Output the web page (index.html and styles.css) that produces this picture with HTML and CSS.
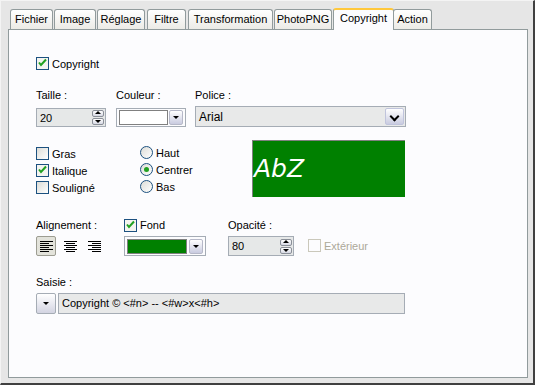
FILE: index.html
```html
<!DOCTYPE html>
<html lang="fr">
<head>
    <meta charset="UTF-8">
    <title>Copyright</title>
    <link rel="stylesheet" href="styles.css">
</head>
<body>
<div class="window">
    <div class="tabs">
        <div class="tab t-fichier">Fichier</div>
        <div class="tab t-image">Image</div>
        <div class="tab t-reglage">Réglage</div>
        <div class="tab t-filtre">Filtre</div>
        <div class="tab t-transfo">Transformation</div>
        <div class="tab t-photo">PhotoPNG</div>
        <div class="tab t-copy active">Copyright</div>
        <div class="tab t-action">Action</div>
    </div>

    <div class="panel">
        <div class="row row-enable">
            <label class="check"><span class="box checked"></span>Copyright</label>
        </div>

        <div class="row row-font">
            <div class="field w-taille">
                <div class="caption">Taille :</div>
                <div class="spin">
                    <span class="spin-value">20</span>
                    <span class="spin-btns"><span class="sb up"></span><span class="sb down"></span></span>
                </div>
            </div>
            <div class="field w-couleur">
                <div class="caption">Couleur :</div>
                <div class="combo color-combo">
                    <span class="swatch white"></span>
                    <span class="drop small"></span>
                </div>
            </div>
            <div class="field">
                <div class="caption">Police :</div>
                <div class="combo select">
                    <span class="select-value">Arial</span>
                    <span class="drop big"></span>
                </div>
            </div>
        </div>

        <div class="row row-style">
            <div class="checks">
                <label class="check"><span class="box"></span>Gras</label>
                <label class="check"><span class="box checked"></span>Italique</label>
                <label class="check"><span class="box"></span>Souligné</label>
            </div>
            <div class="radios">
                <label class="radio"><span class="dot"></span>Haut</label>
                <label class="radio"><span class="dot on"></span>Centrer</label>
                <label class="radio"><span class="dot"></span>Bas</label>
            </div>
            <div class="preview">AbZ</div>
        </div>

        <div class="row row-align">
            <div class="field w-align">
                <div class="caption">Alignement :</div>
                <div class="align-btns">
                    <span class="abtn pressed">
                        <svg width="13" height="11" viewBox="0 0 13 11"><path d="M0 .5h13M0 2.5h9M0 4.5h13M0 6.5h9M0 8.5h13M0 10.5h9" stroke="#000"/></svg>
                    </span>
                    <span class="abtn">
                        <svg width="13" height="11" viewBox="0 0 13 11"><path d="M0 .5h13M2 2.5h9M0 4.5h13M2 6.5h9M0 8.5h13M2 10.5h9" stroke="#000"/></svg>
                    </span>
                    <span class="abtn">
                        <svg width="13" height="11" viewBox="0 0 13 11"><path d="M0 .5h13M4 2.5h9M0 4.5h13M4 6.5h9M0 8.5h13M4 10.5h9" stroke="#000"/></svg>
                    </span>
                </div>
            </div>
            <div class="field w-fond">
                <label class="check caption-check"><span class="box checked"></span>Fond</label>
                <div class="combo fond-combo">
                    <span class="swatch green"></span>
                    <span class="drop small"></span>
                </div>
            </div>
            <div class="field w-opac">
                <div class="caption">Opacité :</div>
                <div class="spin opac">
                    <span class="spin-value">80</span>
                    <span class="spin-btns"><span class="sb up"></span><span class="sb down"></span></span>
                </div>
            </div>
            <label class="check disabled ext"><span class="box"></span>Extérieur</label>
        </div>

        <div class="row row-input">
            <div class="field">
                <div class="caption">Saisie :</div>
                <div class="input-line">
                    <span class="menu-btn"></span>
                    <span class="text-field">Copyright © &lt;#n&gt; -- &lt;#w&gt;x&lt;#h&gt;</span>
                </div>
            </div>
        </div>
    </div>
</div>
</body>
</html>
```

FILE: styles.css
```css
* {
    margin: 0;
    padding: 0;
    box-sizing: border-box;
}
body {
    width: 535px;
    height: 385px;
    font-family: 'Liberation Sans', Arial, sans-serif;
    font-size: 11px;
    color: #000;
    overflow: hidden;
}
.window {
    width: 535px;
    height: 385px;
    background-color: #e6e6e6;
    border-top: 1px solid #f4f4f4;
    border-left: 1px solid #f4f4f4;
    border-right: 2px solid #404040;
    border-bottom: 2px solid #404040;
    padding: 0 6px 0 7px;
}
.tabs {
    display: flex;
    align-items: flex-end;
    height: 28px;
    padding-left: 2px;
    gap: 1px;
}
.tab {
    height: 20px;
    line-height: 18px;
    text-align: center;
    border: 1px solid #919b9c;
    border-bottom: none;
    border-radius: 3px 3px 0 0;
    background: linear-gradient(#ffffff, #ecebe6);
    color: #000;
    white-space: nowrap;
}
.t-fichier { width: 43px; }
.t-image { width: 42px; }
.t-reglage { width: 48px; }
.t-filtre { width: 39px; margin-left: 1px; }
.t-transfo { width: 85px; margin-left: 1px; }
.t-photo { width: 58px; }
.t-copy { width: 61px; }
.t-action { width: 39px; }
.tab.active {
    height: 22px;
    margin-bottom: -1px;
    margin-right: -2px;
    position: relative;
    background: #fcfcfe;
    border-top: 2px solid #ffc83c;
    line-height: 16px;
    z-index: 1;
}
.panel {
    width: 520px;
    height: 349px;
    background-color: #fcfcfe;
    border: 1px solid #919b9c;
    padding: 27px 0 0 27px;
}
.row {
    display: flex;
}
.check, .radio {
    display: flex;
    align-items: center;
    gap: 3px;
    height: 13px;
    white-space: nowrap;
}
.box {
    width: 13px;
    height: 13px;
    border: 1px solid #1c5180;
    background: linear-gradient(135deg, #dcdcd7, #ffffff);
    flex-shrink: 0;
}
.box.checked {
    background: #f4f4f0 url("data:image/svg+xml;utf8,<svg xmlns='http://www.w3.org/2000/svg' width='11' height='11'><path d='M2 4.5l2 2.5 5-5.5' stroke='%2321a121' stroke-width='2' fill='none'/></svg>") no-repeat center;
}
.check.disabled {
    color: #aca899;
}
.check.disabled .box {
    border-color: #cac8bb;
    background: #fcfcfe;
}
.row-font {
    margin-top: 19px;
}
.field {
    display: flex;
    flex-direction: column;
}
.caption {
    height: 17px;
    line-height: 12px;
    white-space: nowrap;
}
.w-taille { width: 80px; }
.w-couleur { width: 79px; }
.spin {
    width: 70px;
    height: 19px;
    margin-top: 2px;
    border: 1px solid #a5acb5;
    background: #e6e8e8;
    display: flex;
    align-items: center;
    justify-content: space-between;
    padding: 0 1px 0 3px;
}
.spin-btns {
    display: flex;
    flex-direction: column;
    gap: 1px;
}
.sb {
    width: 12px;
    height: 7px;
    border: 1px solid #8a8f98;
    border-radius: 2px;
    background: linear-gradient(#ffffff, #d7d9e4);
    position: relative;
}
.sb::after {
    content: "";
    position: absolute;
    left: 2px;
    border-left: 3px solid transparent;
    border-right: 3px solid transparent;
}
.sb.up::after {
    top: 0;
    border-bottom: 3px solid #000;
}
.sb.down::after {
    top: 1px;
    border-top: 3px solid #000;
}
.combo {
    display: flex;
    align-items: center;
    border: 1px solid #a5acb5;
}
.color-combo {
    width: 70px;
    height: 19px;
    margin-top: 2px;
    padding: 0 2px;
    justify-content: space-between;
    background: #fcfcfe;
}
.swatch {
    height: 15px;
    border: 1px solid #808080;
}
.swatch.white {
    width: 49px;
    background: #fff;
}
.swatch.green {
    width: 60px;
    background: #008000;
}
.drop {
    position: relative;
    background: linear-gradient(#ffffff, #c9cbe0);
    border: 1px solid #b6b8c8;
    border-radius: 2px;
}
.drop.small {
    width: 14px;
    height: 15px;
}
.drop.small::after {
    content: "";
    position: absolute;
    left: 3px;
    top: 5px;
    border-left: 3px solid transparent;
    border-right: 3px solid transparent;
    border-top: 3px solid #000;
}
.select {
    width: 211px;
    height: 21px;
    background: #e8e9e9;
    justify-content: space-between;
    padding: 0 1px 0 3px;
}
.select-value {
    font-size: 12px;
}
.drop.big {
    width: 19px;
    height: 17px;
    border-color: #c0c4dc;
}
.drop.big::after {
    content: "";
    position: absolute;
    left: 5px;
    top: 4px;
    width: 5px;
    height: 5px;
    border-right: 2px solid #000;
    border-bottom: 2px solid #000;
    transform: rotate(45deg);
}
.row-style {
    margin-top: 13px;
}
.checks {
    width: 104px;
    padding-top: 7px;
    display: flex;
    flex-direction: column;
    gap: 4px;
}
.radios {
    width: 112px;
    padding-top: 6px;
    display: flex;
    flex-direction: column;
    gap: 4px;
}
.dot {
    width: 13px;
    height: 13px;
    border-radius: 50%;
    border: 1px solid #1c5180;
    background: linear-gradient(135deg, #dcdcd7, #ffffff);
    position: relative;
}
.dot.on::after {
    content: "";
    position: absolute;
    left: 3px;
    top: 3px;
    width: 5px;
    height: 5px;
    border-radius: 50%;
    background: #21a121;
}
.preview {
    width: 153px;
    height: 57px;
    background: #008000;
    border-top: 1px solid #808080;
    border-left: 1px solid #808080;
    color: #fff;
    font-family: 'DejaVu Sans', sans-serif;
    font-style: italic;
    font-size: 25px;
    line-height: 56px;
    padding-left: 1px;
}
.row-align {
    margin-top: 22px;
}
.w-align { width: 88px; }
.w-fond { width: 104px; }
.w-opac { width: 80px; }
.align-btns {
    display: flex;
    gap: 4px;
}
.abtn {
    width: 20px;
    height: 20px;
    display: flex;
    align-items: center;
    justify-content: center;
    border: 1px solid transparent;
    border-radius: 2px;
}
.abtn.pressed {
    background: #e3e3db;
    border-color: #9d9d92;
}
.caption-check {
    height: 17px;
    align-items: flex-start;
}
.fond-combo {
    width: 82px;
    height: 20px;
    padding: 0 2px;
    justify-content: space-between;
    background: #fcfcfe;
}
.spin.opac {
    width: 66px;
    margin-top: 0;
    height: 20px;
}
.ext {
    margin-top: 20px;
}
.row-input {
    margin-top: 20px;
}
.input-line {
    display: flex;
    gap: 2px;
}
.menu-btn {
    width: 20px;
    height: 21px;
    border: 1px solid #a5acb5;
    border-radius: 2px;
    background: linear-gradient(#ffffff, #d3d4e2);
    position: relative;
}
.menu-btn::after {
    content: "";
    position: absolute;
    left: 6px;
    top: 8px;
    border-left: 3px solid transparent;
    border-right: 3px solid transparent;
    border-top: 3px solid #000;
}
.text-field {
    width: 347px;
    height: 21px;
    border: 1px solid #a5acb5;
    background: #e8e9e9;
    line-height: 19px;
    padding-left: 3px;
}
```
